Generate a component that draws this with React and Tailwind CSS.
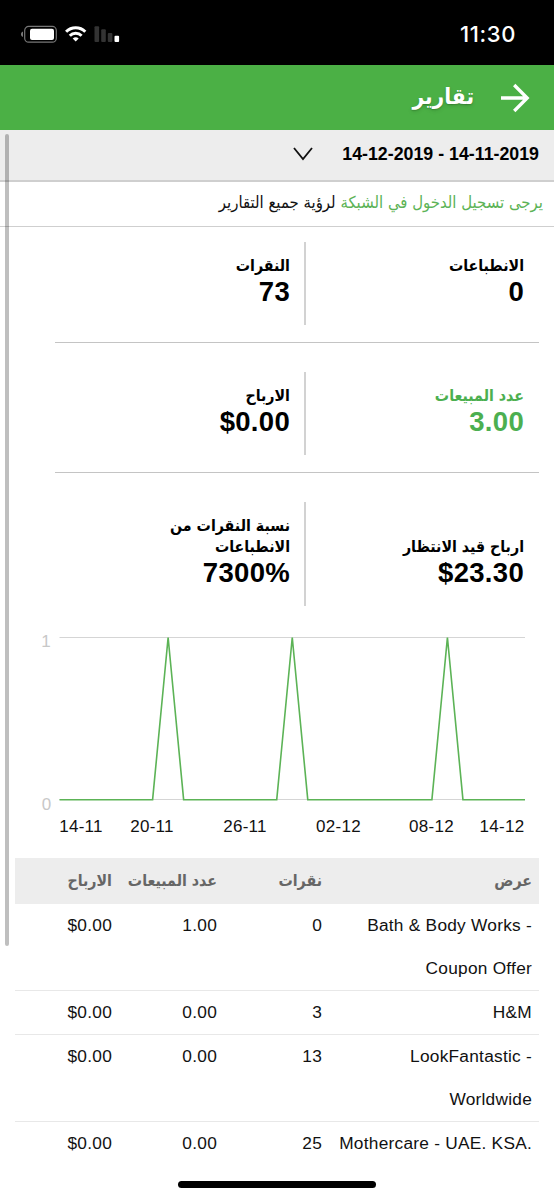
const stats = [
  [
    { label: 'الانطباعات', value: '0' },
    { label: 'النقرات', value: '73' },
  ],
  [
    { label: 'عدد المبيعات', value: '3.00', active: true },
    { label: 'الارباح', value: '$0.00' },
  ],
  [
    { label: 'ارباح قيد الانتظار', value: '$23.30' },
    { label: 'نسبة النقرات من الانطباعات', value: '7300%' },
  ],
];

const offers = [
  { name: ['Bath & Body Works -', 'Coupon Offer'], clicks: '0', sales: '1.00', earnings: '$0.00' },
  { name: ['H&M'], clicks: '3', sales: '0.00', earnings: '$0.00' },
  { name: ['LookFantastic -', 'Worldwide'], clicks: '13', sales: '0.00', earnings: '$0.00' },
  { name: ['Mothercare - UAE. KSA.'], clicks: '25', sales: '0.00', earnings: '$0.00' },
];

// One value per day, 14-11 to 14-12
const daily = Array.from({ length: 31 }, (_, i) => ([7, 15, 25].includes(i) ? 1 : 0));
const points = daily.map((v, i) => `${59.5 + i * 15.517},${v ? 17.5 : 179.7}`).join(' ');

const axisLabels = [
  { x: 81, text: '14-11' },
  { x: 152, text: '20-11' },
  { x: 245, text: '26-11' },
  { x: 338.5, text: '02-12' },
  { x: 431.5, text: '08-12' },
  { x: 502, text: '14-12' },
];

const StatusBar = () => (
  <div dir="ltr" className="flex h-[65px] items-center justify-between bg-black pr-[38px] pl-5 text-white">
    <svg width="104" height="20" viewBox="0 0 104 20" className="mt-[2px]">
      {/* Battery */}
      <path d="M3 7.5v5.500C1.700 12.500 1 11.500 1 10.250S1.700 8 3 7.500z" fill="#777" />
      <rect x="4.700" y="2.400" width="31.600" height="15.800" rx="4" fill="none" stroke="#777" strokeWidth="1.200" />
      <rect x="10" y="4.800" width="24" height="11.200" rx="2" fill="#fff" />
      {/* Wifi */}
      <g fill="none" stroke="#fff" strokeWidth="3">
        <path d="M46.100 7.800a13.600 13.600 0 0 1 19.200 0" />
        <path d="M49.800 11.700a8.300 8.300 0 0 1 11.800 0" />
      </g>
      <path d="M52.700 14.600a4.300 4.300 0 0 1 6 0l-3 3z" fill="#fff" />
      {/* Signal */}
      <rect x="74.500" y="2.200" width="4.600" height="15.800" rx="1" fill="#333" />
      <rect x="81.200" y="5.200" width="4.600" height="12.800" rx="1" fill="#333" />
      <rect x="87.800" y="9" width="4.600" height="9" rx="1" fill="#333" />
      <rect x="94.500" y="11.800" width="4.600" height="6.200" rx="1" fill="#fff" />
    </svg>
    <span className="mt-[3px] font-[Inter,sans-serif] text-[22px] font-medium tracking-[0.600px]">11:30</span>
  </div>
);

const Header = () => (
  <div className="flex h-[65px] items-center bg-[#4bb045] pr-6 text-white">
    <svg width="29" height="30" viewBox="0 0 29 30" className="mt-[1px]" fill="none" stroke="#fff" strokeWidth="3.300">
      <path d="M0 15h26.500M13.200 2l13 13-13 13" />
    </svg>
    <h1 className="mr-[27px] -mt-[2px] font-['DejaVu_Sans_Condensed','DejaVu_Sans',sans-serif] text-[22.500px] font-bold font-stretch-condensed text-shadow-md">
      تقارير
    </h1>
  </div>
);

const StatCell = ({ label, value, active }) => (
  <div className={`flex flex-col justify-end pb-[18px] ${active ? 'text-[#4caf50]' : 'text-black'}`}>
    <p className="w-[140px] font-['DejaVu_Sans_Condensed','DejaVu_Sans',sans-serif] text-[15.800px] leading-[21px] font-bold font-stretch-condensed">
      {label}
    </p>
    <p dir="ltr" className="text-right text-[27.500px] leading-[31px] font-bold tracking-[0.300px]">{value}</p>
  </div>
);

const StatRow = ({ cells, last }) => (
  <div className={`mr-[15px] ml-[55px] pb-[17px] ${last ? '' : 'border-b border-[#c4c4c4]'}`}>
    <div className={`grid grid-cols-[233px_1fr] ${last ? 'h-[104px]' : 'h-[83px]'}`}>
      <div className="flex pr-[15px]">
        <StatCell {...cells[0]} />
      </div>
      <div className="flex border-r-2 border-[#d2d2d2] pr-[14px]">
        <StatCell {...cells[1]} />
      </div>
    </div>
  </div>
);

const Chart = () => (
  <svg width="554" height="235" viewBox="0 0 554 235" className="block" direction="ltr">
    <path d="M59.500 17.500H525M59.500 179.500H525" stroke="#d5d5d5" strokeWidth="1" />
    <polyline points={points} fill="none" stroke="#5cb356" strokeWidth="1.600" />
    <g fontSize="17" fill="#c8c8c8" textAnchor="middle">
      <text x="46" y="27">1</text>
      <text x="46.500" y="189.500">0</text>
    </g>
    <g fontSize="17" fill="#111" textAnchor="middle" letterSpacing="0.300">
      {axisLabels.map((l) => (
        <text key={l.text} x={l.x} y="212">{l.text}</text>
      ))}
    </g>
  </svg>
);

const OffersTable = () => (
  <div className="mx-[15px] text-[17.300px] text-[#111]">
    <div className="flex h-[46px] items-center bg-[#ededed] pr-[7px] font-['DejaVu_Sans_Condensed','DejaVu_Sans',sans-serif] text-[15.800px] font-bold font-stretch-condensed text-[#666]">
      <span className="w-[210px]">عرض</span>
      <span className="w-[105px]">نقرات</span>
      <span className="w-[105px] whitespace-nowrap">عدد المبيعات</span>
      <span>الارباح</span>
    </div>
    {offers.map((o) => (
      <div key={o.name[0]} className="flex border-b border-[#e8e8e8] pr-[7px] leading-[43px] tracking-[0.250px] last:border-b-0">
        <div dir="ltr" className="w-[210px] text-right whitespace-nowrap">
          {o.name.map((line) => (
            <p key={line}>{line}</p>
          ))}
        </div>
        <span className="w-[105px]">{o.clicks}</span>
        <span className="w-[105px]">{o.sales}</span>
        <span><bdi dir="ltr">{o.earnings}</bdi></span>
      </div>
    ))}
  </div>
);

const App = () => (
  <div dir="rtl" className="relative h-[1200px] w-[554px] overflow-hidden bg-white font-['Liberation_Sans',sans-serif]">
    <StatusBar />
    <Header />

    {/* Date range */}
    <div className="flex h-[52px] items-center border-b-2 border-[#cfcfcf] bg-[#ededed] pr-[15px] pb-[2px]">
      <span dir="ltr" className="text-[17.800px] font-bold">14-12-2019 - 14-11-2019</span>
      <svg width="20" height="14" viewBox="0 0 20 14" className="mr-[29px]" fill="none" stroke="#111" strokeWidth="1.800">
        <path d="M1 1l9 11 9-11" />
      </svg>
    </div>

    <p className="h-[45px] border-b border-[#cfcfcf] pr-[11px] font-['DejaVu_Sans_Condensed','DejaVu_Sans',sans-serif] text-[16.600px] leading-[41px] font-stretch-condensed text-[#111]">
      <a href="#" className="text-[#5cb356]">يرجى تسجيل الدخول في الشبكة</a> لرؤية جميع التقارير
    </p>

    <div className="flex flex-col gap-[29px] pt-[15px]">
      {stats.map((cells, i) => (
        <StatRow key={i} cells={cells} last={i === stats.length - 1} />
      ))}
    </div>

    <div className="-mt-[3px] pb-[3px]">
      <Chart />
    </div>
    <OffersTable />

    {/* Scroll indicator */}
    <div className="absolute top-[134px] left-[5px] h-[812px] w-1 rounded-full bg-black/25" />
    {/* Home indicator */}
    <div className="absolute top-[1181px] left-[178px] h-[7px] w-[198px] rounded-full bg-black" />
  </div>
);

export default App;
